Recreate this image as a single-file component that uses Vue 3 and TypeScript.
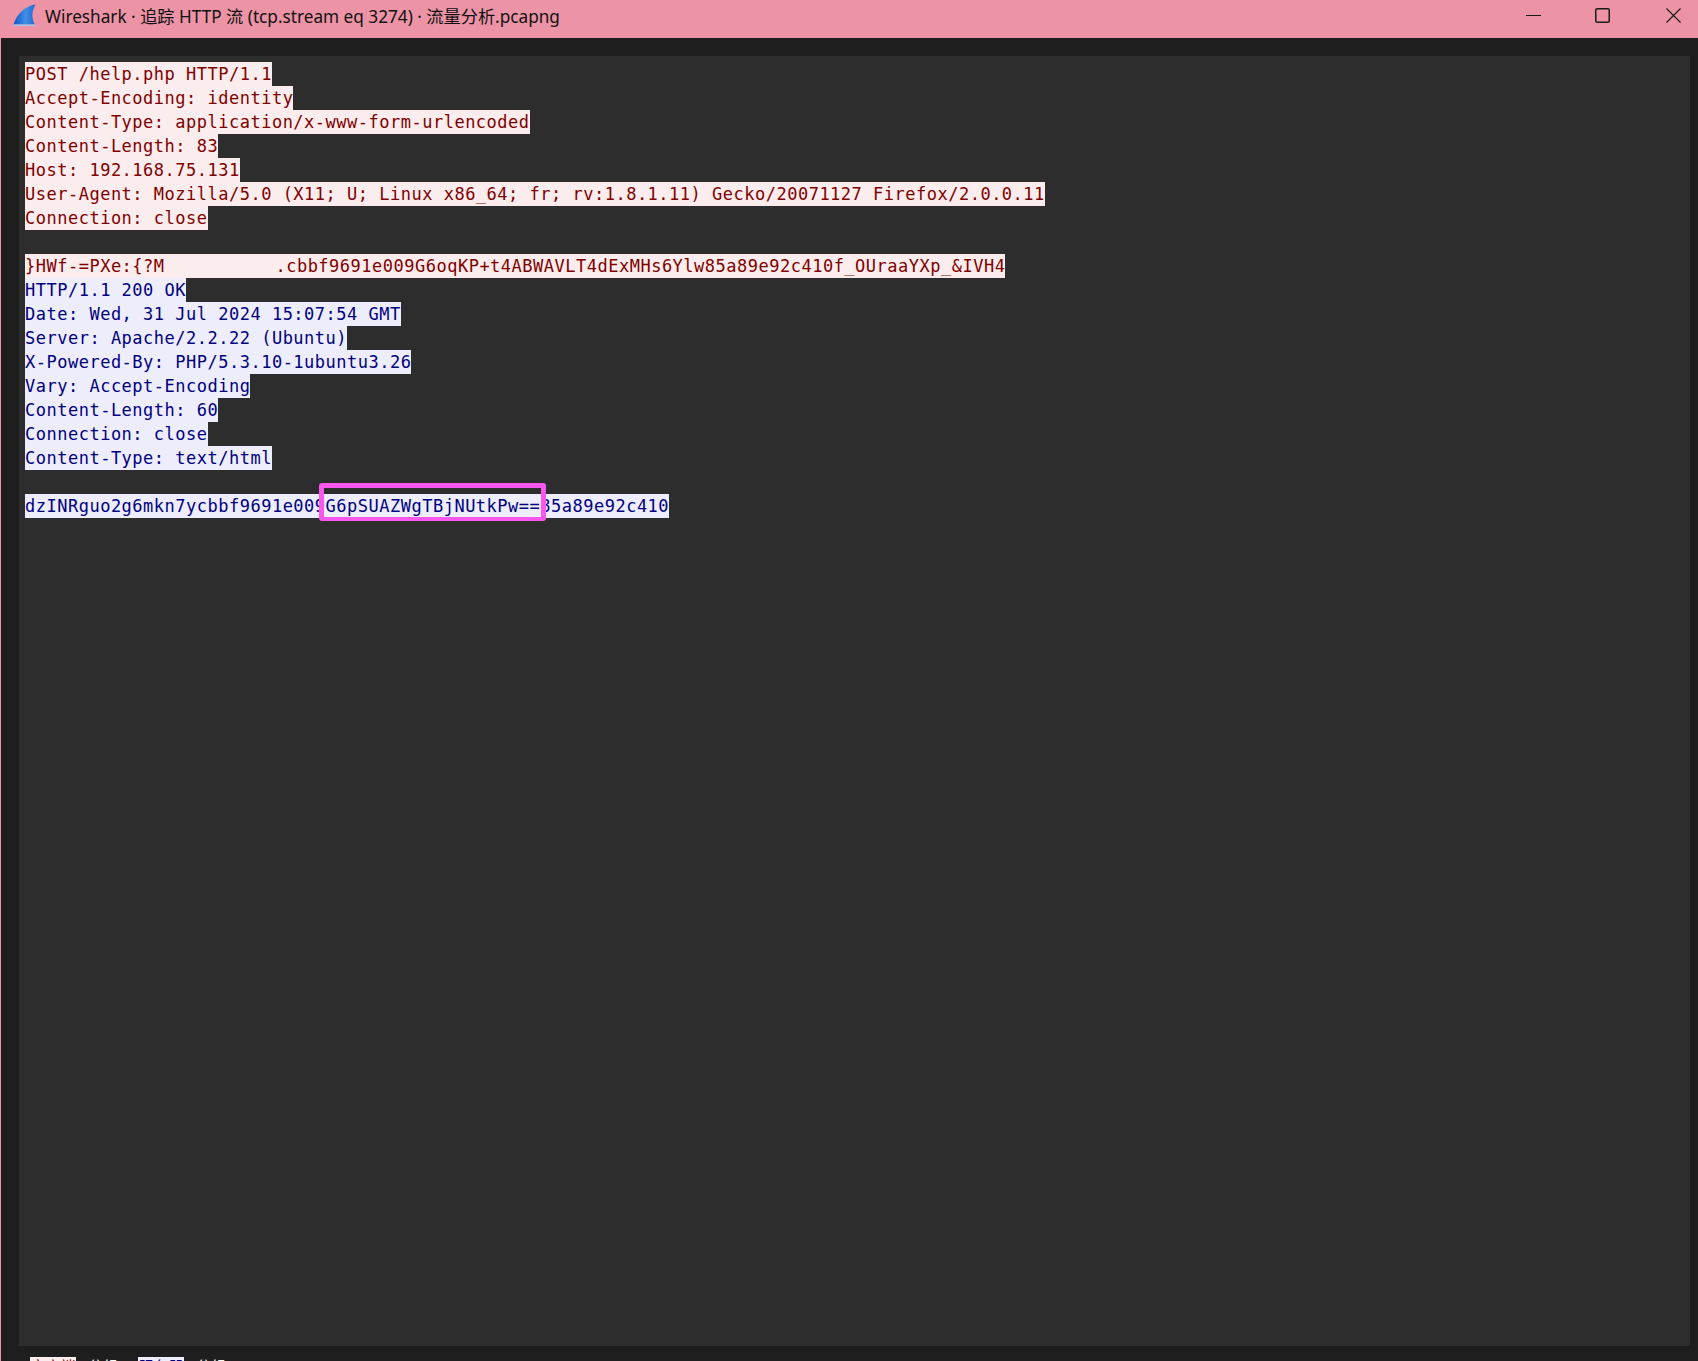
<script setup lang="ts">
const requestLines: string[] = [
  'POST /help.php HTTP/1.1',
  'Accept-Encoding: identity',
  'Content-Type: application/x-www-form-urlencoded',
  'Content-Length: 83',
  'Host: 192.168.75.131',
  'User-Agent: Mozilla/5.0 (X11; U; Linux x86_64; fr; rv:1.8.1.11) Gecko/20071127 Firefox/2.0.0.11',
  'Connection: close',
]
const bodyHead = '}HWf-=PXe:{?M'
const bodyGap = '\u00a0'.repeat(10)
const bodyTail = '.cbbf9691e009G6oqKP+t4ABWAVLT4dExMHs6Ylw85a89e92c410f_OUraaYXp_&IVH4'
const responseLines: string[] = [
  'HTTP/1.1 200 OK',
  'Date: Wed, 31 Jul 2024 15:07:54 GMT',
  'Server: Apache/2.2.22 (Ubuntu)',
  'X-Powered-By: PHP/5.3.10-1ubuntu3.26',
  'Vary: Accept-Encoding',
  'Content-Length: 60',
  'Connection: close',
  'Content-Type: text/html',
]
const responseBody = 'dzINRguo2g6mkn7ycbbf9691e009G6pSUAZWgTBjNUtkPw==85a89e92c410'
</script>

<template>
  <div class="window">
    <header class="titlebar">
      <svg class="logo" viewBox="0 0 24 24" aria-hidden="true">
        <defs>
          <linearGradient id="fin" x1="0" y1="0" x2="1" y2="0">
            <stop offset="0" stop-color="#0f56c4" />
            <stop offset="0.55" stop-color="#3f8fe8" />
            <stop offset="1" stop-color="#1c66cf" />
          </linearGradient>
        </defs>
        <path d="M23.5 0.5C13 2 4 10 0.5 21.5H23C19.5 16 19 8 23.5 0.5Z" fill="url(#fin)" />
        <path d="M0.5 21.5H23L23.5 23H0Z" fill="#a9c4ea" />
      </svg>
      <span class="title">Wireshark · 追踪 HTTP 流 (tcp.stream eq 3274) · 流量分析.pcapng</span>
      <div class="controls">
        <svg class="ctl" viewBox="0 0 15 15"><path d="M0 7.5H15" /></svg>
        <svg class="ctl ctl-max" viewBox="0 0 15 15"><rect x="0.75" y="0.75" width="13.5" height="13.5" rx="1.5" /></svg>
        <svg class="ctl ctl-close" viewBox="0 0 15 15"><path d="M0.5 0.5L14.5 14.5M14.5 0.5L0.5 14.5" /></svg>
      </div>
    </header>
    <main class="content">
      <section class="panel">
        <div class="stream">
          <div v-for="l in requestLines" :key="l" class="line req">{{ l }}</div>
          <div class="line"></div>
          <div class="line req">{{ bodyHead }}<span class="gap">{{ bodyGap }}</span>{{ bodyTail }}</div>
          <div v-for="l in responseLines" :key="'r' + l" class="line res">{{ l }}</div>
          <div class="line"></div>
          <div class="line res">{{ responseBody }}</div>
          <div class="highlight"></div>
        </div>
      </section>
      <footer class="status">
        <span class="chip chip-req">客户端</span><span class="unit">分组,</span>
        <span class="chip chip-res">服务器</span><span class="unit">分组</span>
      </footer>
    </main>
  </div>
</template>

<style scoped>
.window {
  width: 1698px;
  height: 1361px;
  overflow: hidden;
  display: flex;
  flex-direction: column;
  background: #1e1e1e;
}
.titlebar {
  height: 38px;
  flex: none;
  box-sizing: border-box;
  background: #ec93a5;
  display: flex;
  align-items: center;
  padding: 0 0 7px 13px;
  color: #111111;
}
.logo {
  width: 23px;
  height: 23px;
  flex: none;
}
.title {
  margin-left: 9px;
  font: 17.2px "Noto Sans", "Noto Sans CJK SC", sans-serif;
  white-space: pre;
}
.controls {
  margin-left: auto;
  display: flex;
  align-items: center;
  padding-right: 17px;
}
.ctl {
  width: 15px;
  height: 15px;
  fill: none;
  stroke: #1a1a1a;
  stroke-width: 1;
  display: block;
}
.ctl-max {
  margin-left: 54px;
  stroke-width: 1.5;
}
.ctl-close {
  margin-left: 56px;
  stroke-width: 1.2;
}
.content {
  flex: 1;
  min-height: 0;
  border-left: 1px solid #ec93a5;
  padding: 18px 8px 0 18px;
  display: flex;
  flex-direction: column;
}
.panel {
  height: 1290px;
  flex: none;
  box-sizing: border-box;
  background: #2d2d2d;
  padding: 6px 6px 0;
}
.stream {
  position: relative;
  font: 17px "DejaVu Sans Mono", monospace;
  letter-spacing: 0.5px;
}
.line {
  height: 24px;
  line-height: 24px;
  width: fit-content;
  white-space: pre;
}
.gap {
  letter-spacing: 0.85px;
}
.req {
  background: #fbeded;
  color: #800000;
}
.res {
  background: #ededfb;
  color: #000080;
}
.highlight {
  position: absolute;
  left: 294px;
  top: 421px;
  width: 227px;
  height: 38px;
  border: solid #f957ee;
  border-width: 5px 5px 4px;
  border-radius: 3px;
  box-sizing: border-box;
}
.status {
  display: flex;
  padding: 11px 0 0 11px;
  font: 15px "Noto Sans", "Noto Sans CJK SC", sans-serif;
  line-height: 19px;
  white-space: pre;
}
.chip {
  width: 46px;
  text-align: center;
}
.chip-req {
  background: #fbeded;
  color: #800000;
}
.chip-res {
  background: #ededfb;
  color: #000080;
}
.unit {
  margin-left: 12px;
  width: 50px;
  color: #ffffff;
}
</style>
